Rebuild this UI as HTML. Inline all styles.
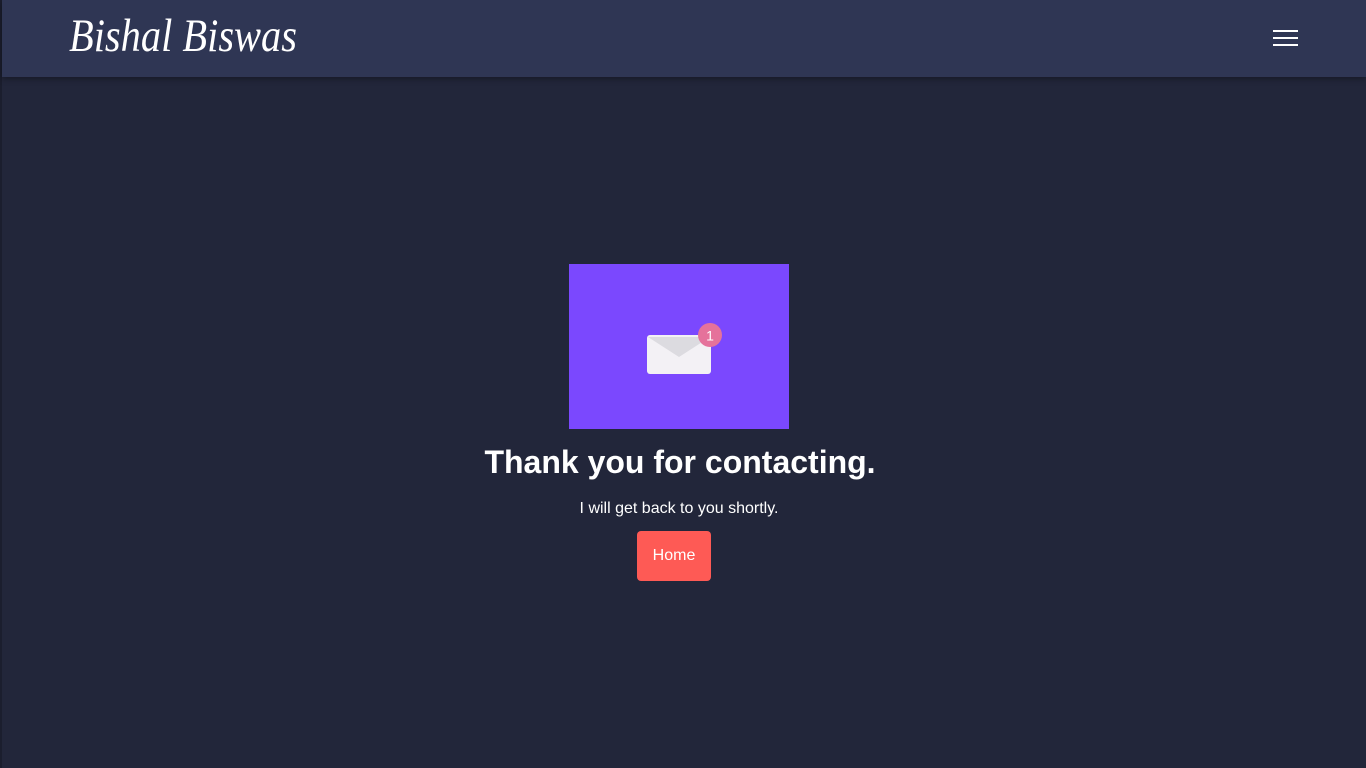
<!DOCTYPE html>
<html><head><meta charset="utf-8"><style>
*{margin:0;padding:0;box-sizing:border-box}
html,body{width:1366px;height:768px;overflow:hidden;background:#22263a;font-family:"Liberation Sans",sans-serif}
.edge{position:absolute;left:0;top:0;width:2px;height:768px;background:#1b1e2e}
header{position:absolute;left:2px;top:0;width:1364px;height:77px;background:#2f3654;box-shadow:0 2px 6px rgba(0,0,0,.35)}
.logo{position:absolute;left:67px;top:9px;color:#fff;font-family:"Liberation Serif",serif;font-style:italic;font-size:47px;font-weight:normal;transform:scaleX(0.86);transform-origin:left}
.burger{position:absolute;left:1271px;top:30px;width:25px}
.burger div{height:2px;background:#fff;margin-bottom:5px}
.card{position:absolute;left:569px;top:264px;width:220px;height:165px;background:#7b48fe}
h1{position:absolute;left:0;width:1360px;top:444px;text-align:center;color:#fff;font-size:32px;font-weight:bold}
p{position:absolute;left:0;width:1358px;top:500px;text-align:center;color:#fff;font-size:16px}
.btn{position:absolute;left:637px;top:531px;width:74px;height:50px;background:#fe5a55;border-radius:4px;color:#fff;font-size:16px;text-align:center;line-height:50px}
</style></head><body>
<div class="edge"></div>
<header><div class="logo">Bishal Biswas</div>
<div class="burger"><div></div><div></div><div></div></div></header>
<div class="card">
<svg width="220" height="165" viewBox="0 0 220 165">
<rect x="78" y="71" width="64" height="39" rx="3" fill="#f3f1f5"/>
<path d="M79 73 L110 93 L141 73 Z" fill="#dcdbe0"/>
<circle cx="141" cy="71" r="12" fill="#e5729b"/>
<text x="141" y="76.5" text-anchor="middle" fill="#fff" font-family="Liberation Sans" font-size="14">1</text>
</svg></div>
<h1>Thank you for contacting.</h1>
<p>I will get back to you shortly.</p>
<div class="btn">Home</div>
</body></html>
